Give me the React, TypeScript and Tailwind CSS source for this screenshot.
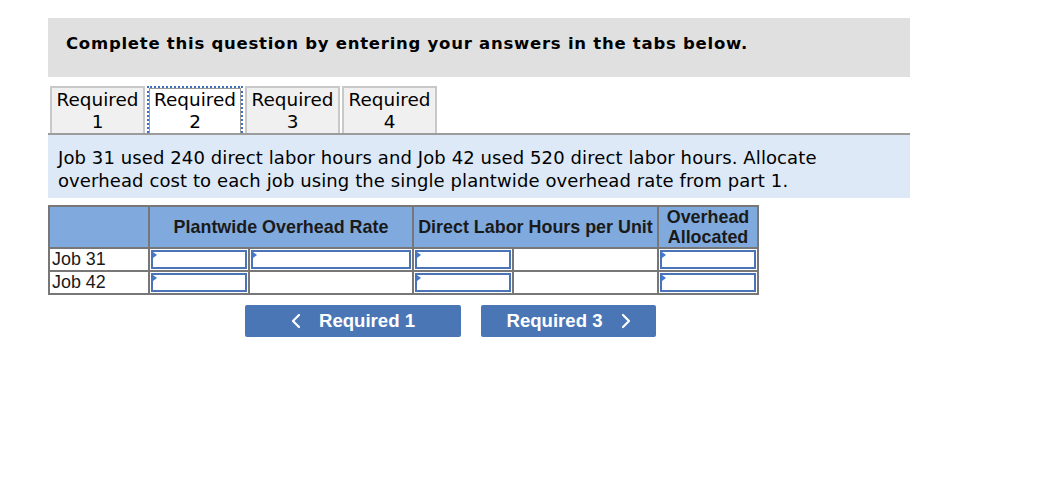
import React from "react";

const verdana = { fontFamily: "Verdana, 'DejaVu Sans', sans-serif" };

function Tri() {
  return (
    <span className="absolute top-0 left-0 w-0 h-0 border-t-[3px] border-b-[3px] border-l-[4px] border-t-transparent border-b-transparent border-l-[#3f7ad8]" />
  );
}

function InputCell() {
  return (
    <div className="bg-white p-[1px]">
      <div className="relative h-full border-2 border-[#4b74b8] bg-white">
        <Tri />
      </div>
    </div>
  );
}

function PlainCell() {
  return <div className="bg-white" />;
}

export default function App() {
  const tabs = ["1", "2", "3", "4"];
  return (
    <div className="w-[1040px] h-[496px] bg-white pt-[18px] pl-[48px]">
      <div className="w-[862px] h-[59px] bg-[#e0e0e0] flex items-center pl-[18px] pb-[6px]">
        <span className="text-[16.5px] font-bold text-black tracking-[0.75px]" style={verdana}>
          Complete this question by entering your answers in the tabs below.
        </span>
      </div>

      <div className="mt-[9px] w-[862px]">
        <div className="flex gap-[2px] pl-[2px]">
          {tabs.map((t, i) => {
            const active = i === 1;
            return (
              <div
                key={t}
                className={
                  active
                    ? "w-[96px] h-[47px] bg-white border-2 border-b-0 border-dotted border-[#3d6fc0] p-0"
                    : "w-[95px] h-[47px] bg-[#f0f0f0] border-2 border-b-0 border-[#c8c8c8]"
                }
              >
                <div
                  className={
                    active
                      ? "h-full border-[1.5px] border-b-0 border-[#9a9a9a] flex flex-col items-center justify-center"
                      : "h-full flex flex-col items-center justify-center"
                  }
                >
                  <span className="text-[18.4px] leading-[22px] text-black" style={verdana}>
                    Required
                  </span>
                  <span className="text-[18.4px] leading-[22px] text-black" style={verdana}>
                    {t}
                  </span>
                </div>
              </div>
            );
          })}
        </div>
        <div className="h-[2px] bg-[#9c9c9c]" />
        <div className="h-[63px] bg-[#dde9f6] pl-[10px] pt-[11px]">
          <p className="text-[18px] leading-[23px] tracking-[0.1px] text-black" style={verdana}>
            Job 31 used 240 direct labor hours and Job 42 used 520 direct labor hours. Allocate
            <br />
            overhead cost to each job using the single plantwide overhead rate from part 1.
          </p>
        </div>
      </div>

      <div
        className="mt-[7px] inline-grid grid-cols-[98px_98px_162px_98px_143px_98px] grid-rows-[40px_21px_21px] gap-[2px] p-[2px] bg-[#777777] text-[17.9px] text-[#1a1a1a]"
        style={{ fontFamily: "'Liberation Sans', Arial, sans-serif" }}
      >
        <div className="bg-[#80aadd]" />
        <div className="col-span-2 bg-[#80aadd] flex items-center justify-center font-bold">
          Plantwide Overhead Rate
        </div>
        <div className="col-span-2 bg-[#80aadd] flex items-center justify-center font-bold">
          Direct Labor Hours per Unit
        </div>
        <div className="bg-[#80aadd] flex flex-col items-center justify-center font-bold leading-[20px]">
          <span>Overhead</span>
          <span>Allocated</span>
        </div>

        <div className="bg-white pl-[2px] leading-[21px]">Job 31</div>
        <InputCell />
        <InputCell />
        <InputCell />
        <PlainCell />
        <InputCell />

        <div className="bg-white pl-[2px] leading-[21px]">Job 42</div>
        <InputCell />
        <PlainCell />
        <InputCell />
        <PlainCell />
        <InputCell />
      </div>

      <div
        className="mt-[10px] flex gap-[20px] pl-[197px]"
        style={{ fontFamily: "'Liberation Sans', Arial, sans-serif" }}
      >
        <button className="w-[216px] h-[32px] bg-[#4a76b6] rounded-[2px] text-white font-bold text-[18.6px] flex items-center justify-center gap-[18px]">
          <svg width="10" height="16" viewBox="0 0 10 16" fill="none">
            <path d="M8 2 L2 8 L8 14" stroke="white" strokeWidth="2.2" strokeLinecap="round" strokeLinejoin="round" />
          </svg>
          <span>Required 1</span>
        </button>
        <button className="w-[175px] h-[32px] bg-[#4a76b6] rounded-[2px] text-white font-bold text-[18.6px] flex items-center justify-center gap-[18px]">
          <span>Required 3</span>
          <svg width="10" height="16" viewBox="0 0 10 16" fill="none">
            <path d="M2 2 L8 8 L2 14" stroke="white" strokeWidth="2.2" strokeLinecap="round" strokeLinejoin="round" />
          </svg>
        </button>
      </div>
    </div>
  );
}
